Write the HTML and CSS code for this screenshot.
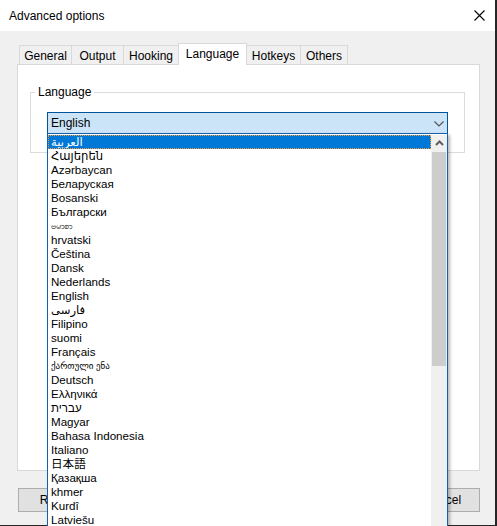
FILE: index.html
```html
<!DOCTYPE html>
<html>
<head>
<meta charset="utf-8">
<link rel="stylesheet" href="styles.css">
</head>
<body>
<div class="window">
  <div class="titlebar">
    <span class="title">Advanced options</span>
    <svg class="close" width="11" height="11" viewBox="0 0 11 11"><path d="M0.5 0.5 L10.5 10.5 M10.5 0.5 L0.5 10.5" stroke="#000" stroke-width="1.1" fill="none"/></svg>
  </div>
  <div class="content">
    <div class="tabs">
      <div class="tab t-general">General</div>
      <div class="tab t-output">Output</div>
      <div class="tab t-hooking">Hooking</div>
      <div class="tab t-language selected">Language</div>
      <div class="tab t-hotkeys">Hotkeys</div>
      <div class="tab t-others">Others</div>
    </div>
    <div class="panel">
      <fieldset class="group">
        <legend>Language</legend>
        <div class="combo">
          <span>English</span>
          <svg class="chev" width="10" height="6" viewBox="0 0 10 6"><path d="M0.5 0.5 L5 5 L9.5 0.5" stroke="#505050" stroke-width="1.1" fill="none"/></svg>
        </div>
      </fieldset>
    </div>
    <div class="buttons">
      <button class="btn">Reset</button>
      <div class="spacer"></div>
      <button class="btn">OK</button>
      <button class="btn">Cancel</button>
    </div>
  </div>
</div>
<div class="dropdown">
  <div class="items">
    <div class="item active">العربية</div>
    <div class="item">Հայերեն</div>
    <div class="item">Azərbaycan</div>
    <div class="item">Беларуская</div>
    <div class="item">Bosanski</div>
    <div class="item">Български</div>
    <div class="item small">ဗမာစာ</div>
    <div class="item">hrvatski</div>
    <div class="item">Čeština</div>
    <div class="item">Dansk</div>
    <div class="item">Nederlands</div>
    <div class="item">English</div>
    <div class="item">فارسی</div>
    <div class="item">Filipino</div>
    <div class="item">suomi</div>
    <div class="item">Français</div>
    <div class="item small">ქართული ენა</div>
    <div class="item">Deutsch</div>
    <div class="item">Ελληνικά</div>
    <div class="item">עברית</div>
    <div class="item">Magyar</div>
    <div class="item">Bahasa Indonesia</div>
    <div class="item">Italiano</div>
    <div class="item">日本語</div>
    <div class="item">Қазақша</div>
    <div class="item">khmer</div>
    <div class="item">Kurdî</div>
    <div class="item">Latviešu</div>
  </div>
  <div class="scrollbar">
    <div class="sb-up">
      <svg width="9" height="6" viewBox="0 0 9 6"><path d="M1 5 L4.5 1.5 L8 5" stroke="#606060" stroke-width="2" fill="none"/></svg>
    </div>
    <div class="sb-thumb"></div>
    <div class="sb-track"></div>
  </div>
</div>
</body>
</html>
```

FILE: styles.css
```css
html, body {
  margin: 0;
  padding: 0;
}
body {
  width: 497px;
  height: 526px;
  overflow: hidden;
  background: #262626;
  position: relative;
  font-family: "Liberation Sans", "DejaVu Sans", sans-serif;
  font-size: 12px;
  color: #000;
}
.window {
  width: 495px;
  height: 525px;
  background: #f0f0f0;
  box-sizing: border-box;
}
.titlebar {
  height: 31px;
  background: #fff;
  display: flex;
  align-items: center;
  justify-content: space-between;
  padding: 1px 10px 0 9px;
  box-sizing: border-box;
}
.title {
  font-size: 12px;
}
.close {
  display: block;
  margin-top: -2px;
}
.content {
  padding: 12px 16px 0 17px;
}
.tabs {
  display: flex;
  align-items: flex-end;
  height: 21px;
  margin-left: 2px;
}
.tab {
  height: 19px;
  box-sizing: border-box;
  border: 1px solid #d9d9d9;
  border-bottom: none;
  background: #f0f0f0;
  margin-left: -1px;
  display: flex;
  align-items: center;
  justify-content: center;
  padding-top: 1px;
}
.t-general { width: 53px; margin-left: 0; }
.t-output { width: 53px; }
.t-hooking { width: 56px; }
.t-language { width: 69px; }
.t-hotkeys { width: 55px; }
.t-others { width: 48px; }
.tab.selected {
  height: 22px;
  background: #fff;
  margin-bottom: -1px;
  position: relative;
  z-index: 1;
  padding-top: 0;
  padding-bottom: 1px;
}
.panel {
  width: 463px;
  height: 407px;
  box-sizing: border-box;
  border: 1px solid #d9d9d9;
  background: #fff;
  padding-top: 20px;
}
.group {
  margin: 0 0 0 12px;
  width: 435px;
  box-sizing: border-box;
  border: 1px solid #dcdcdc;
  padding: 0 16px 18px 16px;
}
.group legend {
  margin-left: -12px;
  padding: 0 3px;
  line-height: 14px;
  font-size: 12px;
}
.combo {
  margin-top: 13px;
  height: 22px;
  box-sizing: border-box;
  border: 1px solid #005499;
  background: #cce4f7;
  display: flex;
  align-items: center;
  justify-content: space-between;
  padding: 0 3px 0 3px;
}
.chev {
  display: block;
  margin-top: 1px;
}
.buttons {
  display: flex;
  width: 463px;
  margin-top: 17px;
  gap: 6px;
}
.spacer {
  flex: 1;
}
.btn {
  width: 75px;
  height: 24px;
  box-sizing: border-box;
  border: 1px solid #adadad;
  background: #e1e1e1;
  font-family: "Liberation Sans", "DejaVu Sans", sans-serif;
  font-size: 12px;
  color: #000;
  padding: 0;
  margin: 0;
}
.btn:first-child {
  margin-left: 1px;
}
.dropdown {
  position: absolute;
  left: 47px;
  top: 133px;
  width: 401px;
  height: 396px;
  box-sizing: border-box;
  border: 1px solid #1460b0;
  background: #fff;
  display: flex;
  padding-top: 1px;
  box-shadow: 2px 2px 3px rgba(0, 0, 0, 0.28);
}
.items {
  flex: 1;
  font-family: "Liberation Sans", "DejaVu Sans", "Noto Sans CJK JP", sans-serif;
  font-size: 11.6px;
}
.item {
  height: 14px;
  line-height: 14px;
  padding-left: 3px;
  white-space: nowrap;
  overflow: hidden;
  box-sizing: border-box;
}
.item.small {
  font-size: 9px;
}
.item.active {
  background: #0078d7;
  color: #fff;
  border: 1px dotted #f39a3c;
  line-height: 12px;
  padding-left: 2px;
}
.scrollbar {
  width: 16px;
  display: flex;
  flex-direction: column;
  background: #f0f0f0;
}
.sb-up {
  height: 17px;
  display: flex;
  align-items: center;
  justify-content: center;
}
.sb-up svg {
  display: block;
  margin-top: -1px;
}
.sb-thumb {
  height: 214px;
  background: #cdcdcd;
  margin: 0 1px;
}
.sb-track {
  flex: 1;
}
```
